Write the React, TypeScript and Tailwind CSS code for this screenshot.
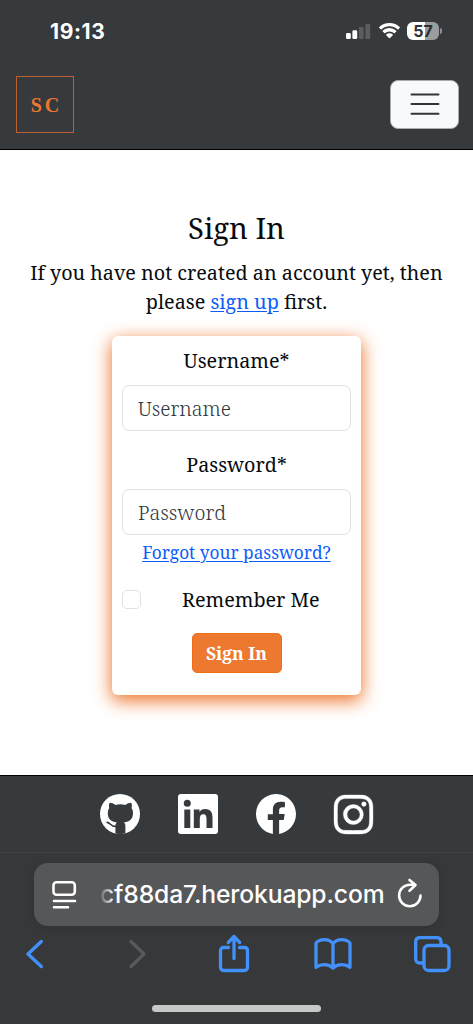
import React from "react";
import { BsFacebook, BsInstagram } from "react-icons/bs";

const serif = "font-['Noto_Serif','Droid_Serif','DejaVu_Serif_Condensed','DejaVu_Serif',serif]";

function StatusBar() {
  return (
    <div className="flex h-[62px] shrink-0 items-center justify-between pl-[50px] pr-[31px] font-['Inter',sans-serif]">
      <span className="pt-[1px] text-[21px] font-bold leading-none tracking-[0.6px] text-white">19:13</span>
      <div className="flex items-center">
        <svg width="26" height="18" viewBox="0 0 26 18" className="mr-[7px]">
          <rect x="0" y="11" width="4.8" height="6" rx="1.3" fill="#fff" />
          <rect x="6.4" y="8.2" width="4.8" height="8.8" rx="1.3" fill="#fff" />
          <rect x="12.9" y="5" width="4.8" height="12" rx="1.3" fill="#5b5d5f" />
          <rect x="19.4" y="2" width="4.8" height="15" rx="1.3" fill="#5b5d5f" />
        </svg>
        <svg width="21" height="16" viewBox="0 0 21 16" className="mr-[7px]" fill="#fff">
          <path d="M10.5 0C6.500 0 2.900 1.500.3 4 0 4.300 0 4.600.3 4.900l1.400 1.400c.3.300.6.300.9 0C4.700 4.400 7.500 3.300 10.500 3.300s5.800 1.100 7.900 3c.3.300.6.300.9 0l1.400-1.400c.3-.3.300-.6 0-.9C18.100 1.500 14.500 0 10.500 0Z" />
          <path d="M10.500 5.100c-2.700 0-5 1-6.800 2.600-.3.300-.3.600 0 .9l1.500 1.500c.3.300.6.200.9 0a6.600 6.600 0 0 1 8.800 0c.3.200.6.300.9 0l1.500-1.500c.3-.3.300-.6 0-.9a10 10 0 0 0-6.800-2.600Z" />
          <path d="M10.500 10.200c-1.300 0-2.400.4-3.300 1.200-.3.300-.3.500 0 .8l2.800 2.900c.3.300.7.300 1 0l2.800-2.900c.3-.3.300-.5 0-.8-.9-.8-2-1.200-3.300-1.200Z" />
        </svg>
        <div className="flex h-[18px] w-[32px] items-center justify-center rounded-[6px] bg-[linear-gradient(90deg,#fff_57%,#9a9c9d_57%)] text-[16px] font-bold leading-none text-[#2d3032]">57</div>
        <div className="ml-[1px] h-[6px] w-[2px] rounded-r-full bg-[#8b8d8e]" />
      </div>
    </div>
  );
}

function Field({ label, hint }: { label: string; hint: string }) {
  return (
    <div className="flex flex-col">
      <div className="flex h-[29px] items-center justify-center text-[19.75px]">{label}</div>
      <div className="mt-[10px] flex h-[46px] items-center rounded-[7px] border-[1.500px] border-[#dee2e6] pl-[15px] pt-[1px] text-[19.8px] font-light text-[#30363c]">{hint}</div>
    </div>
  );
}

function GithubMark() {
  return (
    <svg width="40" height="40" viewBox="0 0 40 40">
      <defs>
        <clipPath id="disc"><circle cx="20" cy="20" r="20" /></clipPath>
      </defs>
      <circle cx="20" cy="20" r="20" fill="#fff" />
      <g clipPath="url(#disc)">
        <path d="M9.600 8.800c.4-.5 3.700.4 5.900 2.100 3-.8 6.800-.8 9.800 0 2.200-1.700 5.500-2.600 5.900-2.100.9 1.700.8 3.900.3 5.300 1 1.300 1.500 3 1.500 4.900 0 6-3.300 8.600-9 9.500 1 .9 1.400 2 1.400 3.800V41h-10v-8.700c0-1.800.5-2.900 1.400-3.800-5.700-.9-9-3.500-9-9.500 0-1.900.5-3.600 1.500-4.900-.5-1.400-.6-3.600.3-5.300Z" fill="#373a3d" />
        <path d="M7.200 28.300c3.200.3 3 4.500 9.300 4.200" fill="none" stroke="#373a3d" strokeWidth="1.700" strokeLinecap="round" />
      </g>
    </svg>
  );
}

function LinkedinMark() {
  return (
    <svg width="40" height="40" viewBox="0 0 40 40">
      <rect width="40" height="40" rx="3" fill="#fff" />
      <g fill="#373a3d">
        <circle cx="9.300" cy="9.200" r="3.500" />
        <path d="M6.300 15.500h6V34h-6zM15.800 15.500h5.700V18c1-1.700 2.900-2.900 5.700-2.900 5.700 0 7.300 3.600 7.300 9V34h-6v-9c0-2.600-.5-4.800-3.200-4.800-2.700 0-3.500 2-3.500 4.700V34h-6z" />
      </g>
    </svg>
  );
}

function Toolbar() {
  return (
    <div className="flex h-[56px] shrink-0 items-center pl-[24px] text-[#4291fb]">
      <svg width="21" height="32" viewBox="0 0 21 32" fill="none" stroke="currentColor" strokeWidth="3.300" strokeLinecap="round" strokeLinejoin="round"><path d="M17.300 3.500 4 16l13.300 12.500" /></svg>
      <svg className="ml-[82px]" width="20" height="32" viewBox="0 0 20 32" fill="none" stroke="#58595b" strokeWidth="3.300" strokeLinecap="round" strokeLinejoin="round"><path d="M4 3.500 17 16 4 28.500" /></svg>
      <svg className="ml-[71px]" width="32" height="40" viewBox="0 0 32 40" fill="none" stroke="currentColor" strokeWidth="3.300" strokeLinecap="round" strokeLinejoin="round"><path d="M10.500 13.500H5.800c-2.200 0-3.300 1.100-3.300 3.300V33c0 2.300 1.100 3.500 3.500 3.500h20c2.400 0 3.500-1.200 3.500-3.500V16.800c0-2.200-1.100-3.300-3.300-3.300h-4.700M16 24.500V3M10.300 8.500 16 2.500l5.700 6" /></svg>
      <svg className="ml-[64px]" width="38" height="32" viewBox="0 0 38 32" fill="none" stroke="currentColor" strokeWidth="3.300" strokeLinejoin="round"><path d="M19 5.500C16.500 2.800 13.500 1.700 10.300 1.700 7 1.700 4 2.800 2 5v24.300c2.400-1.700 5.200-2.600 8.300-2.600 3.300 0 6.300 1 8.700 3.300 2.400-2.300 5.400-3.300 8.700-3.300 3.100 0 5.900.9 8.300 2.600V5c-2-2.200-5-3.300-8.300-3.300-3.200 0-6.200 1.100-8.700 3.800Zm0 0V30" /></svg>
      <svg className="ml-[62px]" width="37" height="37" viewBox="0 0 37 37" fill="none" stroke="currentColor" strokeWidth="3.300" strokeLinejoin="round"><rect x="10" y="9.500" width="25" height="25" rx="4.500" /><path d="M10 27H6c-3 0-4.300-1.500-4.300-4.500V6C1.700 3 3 1.700 6 1.700h16.500C25.500 1.700 27 3 27 6v4" /></svg>
    </div>
  );
}

export default function App() {
  return (
    <div className="flex h-[1024px] w-[473px] flex-col overflow-hidden bg-white">
      <header className="flex h-[150px] shrink-0 flex-col border-b border-black bg-[#373a3d]">
        <StatusBar />
        <nav className="flex h-[84px] items-center justify-between pl-4 pr-[14px]">
          <div className="mt-[1px] flex h-[57px] w-[58px] items-center justify-center border-[1.500px] border-[#bd6030] pt-[1px] font-['Liberation_Serif',serif] text-[20px] font-bold text-[#ee772f]">
            <span className="tracking-[3px]">S</span><span>C</span>
          </div>
          <div className="flex h-[49px] w-[69px] items-center justify-center rounded-[8px] border border-[#a9abad] bg-[#f8f9fa]">
            <svg width="30" height="22" viewBox="0 0 30 22" stroke="#30353a" strokeWidth="2" strokeLinecap="round"><path d="M1.500 1.500h27M1.500 11h27M1.500 20.700h27" /></svg>
          </div>
        </nav>
      </header>

      <main className={`flex h-[625px] shrink-0 flex-col items-center pt-[60px] text-[#080b0e] ${serif}`}>
        <h1 className="h-[36px] text-[29.2px] leading-[37px]">Sign In</h1>
        <p className="mt-[12px] whitespace-nowrap text-center text-[19.75px] leading-[29px]">
          If you have not created an account yet, then<br />
          please <a className="text-[#0d5dfa] underline underline-offset-2">sign up</a> first.
        </p>
        <form className="mt-[20px] flex h-[359px] w-[249px] flex-col rounded-[6px] bg-white px-[10px] pt-[10px] shadow-[0_5px_18px_1px_#ee772f]">
          <Field label="Username*" hint="Username" />
          <div className="h-[19px]" />
          <Field label="Password*" hint="Password" />
          <a className="mt-[4px] h-[27px] whitespace-nowrap text-center text-[17.3px] leading-[27px] text-[#0d5dfa] underline underline-offset-2">Forgot your password?</a>
          <div className="mt-[19px] flex h-[29px] items-center">
            <div className="h-[19px] w-[19px] rounded-[5px] border-[1.500px] border-[#dee2e6]" />
            <div className="ml-[41px] whitespace-nowrap text-[19.75px]">Remember Me</div>
          </div>
          <div className="mt-[19px] flex h-[40px] w-[90px] items-center justify-center self-center rounded-[5px] border border-[#f06e16] bg-[#ec792f] pt-[1px] text-[17.5px] font-bold text-white">Sign In</div>
        </form>
      </main>

      <footer className="flex h-[77px] shrink-0 items-center gap-[38px] border-t border-black bg-[#373a3d] pl-[100px] text-white">
        <GithubMark />
        <LinkedinMark />
        <BsFacebook size={40} />
        <BsInstagram size={39} stroke="currentColor" strokeWidth={0.15} className="overflow-visible" />
      </footer>

      <div className="flex h-[172px] shrink-0 flex-col border-t border-[#3f4042] bg-[#373839]">
        <div className="mx-[34px] mt-[10px] flex h-[63px] shrink-0 items-center rounded-[14px] bg-[#565758] pl-[17px] shadow-[0_2px_10px_rgba(0,0,0,0.12)]">
          <svg className="shrink-0" width="26" height="30" viewBox="0 0 26 30" fill="none" stroke="#fff" strokeWidth="2.600" strokeLinecap="round"><rect x="2.500" y="2.200" width="21.300" height="12.600" rx="3" /><path d="M3 21h21M3 27.200h14" /></svg>
          <div className="ml-[23px] w-[297px] shrink-0 whitespace-nowrap font-['Inter',sans-serif] text-[24.7px] font-medium tracking-[-0.15px] text-white"><span className="bg-[linear-gradient(90deg,#626364,#fff)] bg-clip-text text-transparent">c</span>f88da7.herokuapp.com</div>
          <svg width="26" height="32" viewBox="0 0 26 32" className="-mt-[2px] shrink-0" fill="none" stroke="#fff" strokeWidth="2.600" strokeLinecap="round" strokeLinejoin="round"><path d="M23.500 17.500A10.700 10.700 0 1 1 12.800 6.800h5M12.500 2l6 5-6 5.800" /></svg>
        </div>
        <Toolbar />
        <div className="mt-[23px] h-[7px] w-[169px] self-center rounded-full bg-[#c6c7c7]" />
      </div>
    </div>
  );
}
